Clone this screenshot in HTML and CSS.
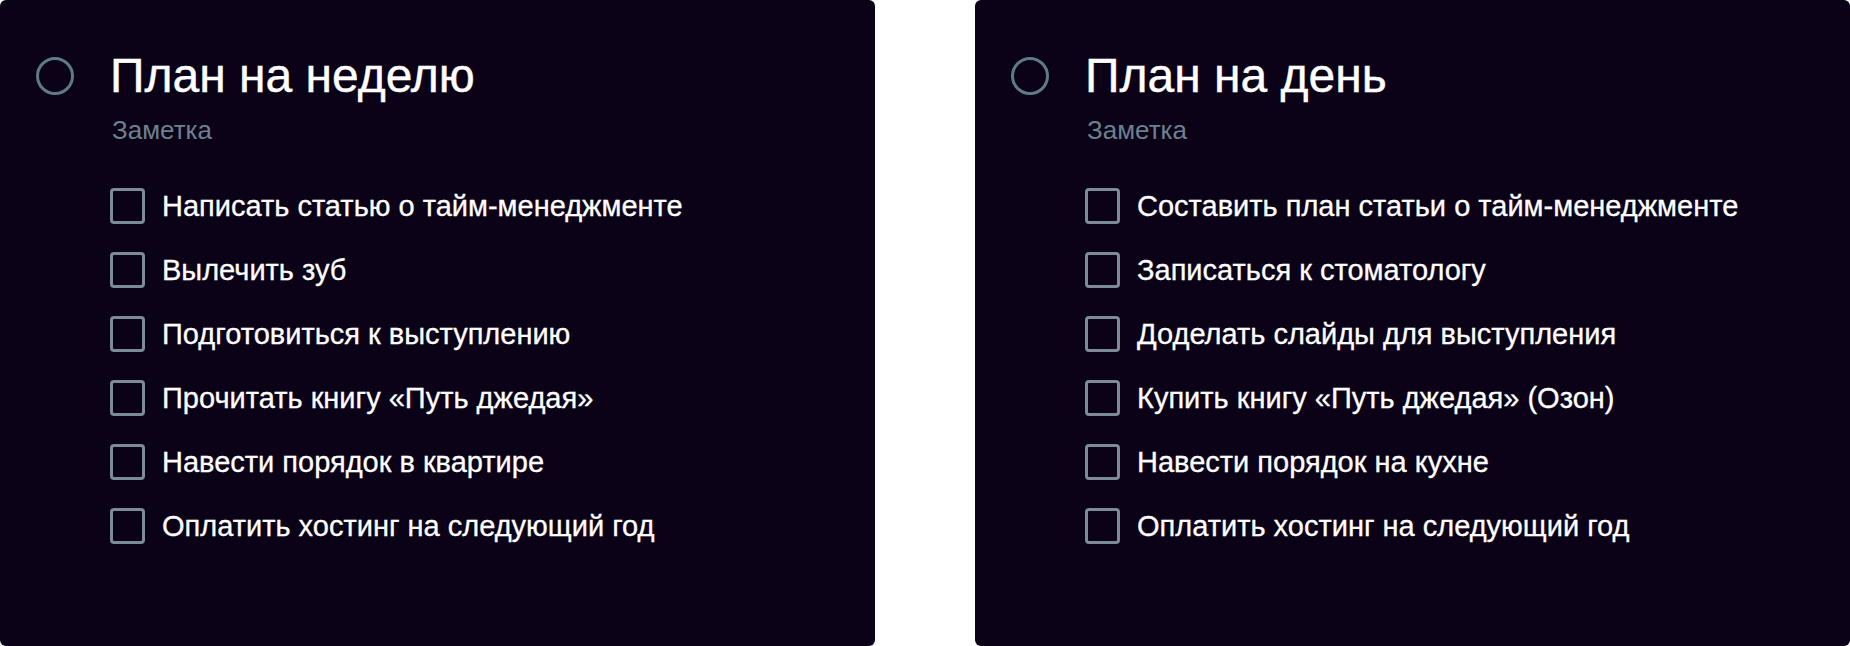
FILE: index.html
```html
<!DOCTYPE html>
<html lang="ru">
<head>
<meta charset="utf-8">
<title>Планы</title>
<link rel="stylesheet" href="styles.css">
</head>
<body>
<main class="board">
  <section class="card">
    <header class="head">
      <span class="status"></span>
      <h1 class="title">План на неделю</h1>
    </header>
    <p class="note">Заметка</p>
    <ul class="list">
      <li class="item"><span class="box"></span><span class="label">Написать статью о тайм-менеджменте</span></li>
      <li class="item"><span class="box"></span><span class="label">Вылечить зуб</span></li>
      <li class="item"><span class="box"></span><span class="label">Подготовиться к выступлению</span></li>
      <li class="item"><span class="box"></span><span class="label">Прочитать книгу «Путь джедая»</span></li>
      <li class="item"><span class="box"></span><span class="label">Навести порядок в квартире</span></li>
      <li class="item"><span class="box"></span><span class="label">Оплатить хостинг на следующий год</span></li>
    </ul>
  </section>
  <section class="card">
    <header class="head">
      <span class="status"></span>
      <h1 class="title">План на день</h1>
    </header>
    <p class="note">Заметка</p>
    <ul class="list">
      <li class="item"><span class="box"></span><span class="label">Составить план статьи о тайм-менеджменте</span></li>
      <li class="item"><span class="box"></span><span class="label">Записаться к стоматологу</span></li>
      <li class="item"><span class="box"></span><span class="label">Доделать слайды для выступления</span></li>
      <li class="item"><span class="box"></span><span class="label">Купить книгу «Путь джедая» (Озон)</span></li>
      <li class="item"><span class="box"></span><span class="label">Навести порядок на кухне</span></li>
      <li class="item"><span class="box"></span><span class="label">Оплатить хостинг на следующий год</span></li>
    </ul>
  </section>
</main>
</body>
</html>
```

FILE: styles.css
```css
html, body {
  margin: 0;
  padding: 0;
  background: #ffffff;
}

body {
  font-family: "Liberation Sans", Arial, sans-serif;
  width: 1850px;
  height: 646px;
  overflow: hidden;
}

.board {
  display: flex;
  gap: 100px;
  height: 646px;
}

.card {
  box-sizing: border-box;
  width: 875px;
  height: 646px;
  background: #0b0218;
  border-radius: 6px;
  padding: 57px 0 0 36px;
  color: #ffffff;
}

.head {
  display: flex;
  align-items: center;
  gap: 36px;
  height: 38px;
}

.status {
  box-sizing: border-box;
  width: 38px;
  height: 38px;
  border: 3.5px solid #5e7a86;
  border-radius: 50%;
  flex: none;
}

.title {
  margin: 0;
  font-size: 48px;
  font-weight: 400;
  line-height: 38px;
  color: #ffffff;
  -webkit-text-stroke: 0.4px #ffffff;
}

.note {
  margin: 21px 0 0 76px;
  font-size: 26px;
  line-height: 28px;
  color: #6c808d;
}

.list {
  list-style: none;
  margin: 44px 0 0 74px;
  padding: 0;
  display: flex;
  flex-direction: column;
  gap: 28px;
}

.item {
  display: flex;
  align-items: center;
  gap: 17px;
  height: 36px;
}

.box {
  box-sizing: border-box;
  width: 35px;
  height: 36px;
  border: 3.5px solid #7b8b98;
  border-radius: 4px;
  flex: none;
}

.label {
  font-size: 29px;
  line-height: 36px;
  color: #ffffff;
  -webkit-text-stroke: 0.3px #ffffff;
}
```
